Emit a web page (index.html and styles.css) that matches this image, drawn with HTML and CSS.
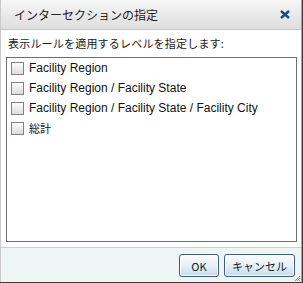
FILE: index.html
```html
<!DOCTYPE html>
<html lang="ja">
<head>
  <meta charset="UTF-8">
  <title>インターセクションの指定</title>
  <link rel="stylesheet" href="styles.css">
</head>
<body>
<div class="frame">
  <div class="dialog">
    <div class="titlebar">
      <span class="title">インターセクションの指定</span>
      <svg class="close" viewBox="0 0 10 9" width="10" height="9">
        <path d="M1 1 L9 8 M9 1 L1 8"></path>
      </svg>
    </div>

    <div class="content">
      <div class="hint">表示ルールを適用するレベルを指定します:</div>
      <div class="levels">
        <label class="level"><span class="check"></span>Facility Region</label>
        <label class="level"><span class="check"></span>Facility Region / Facility State</label>
        <label class="level"><span class="check"></span>Facility Region / Facility State / Facility City</label>
        <label class="level ja"><span class="check"></span>総計</label>
      </div>
    </div>

    <div class="footer">
      <button class="btn btn-ok">OK</button>
      <button class="btn btn-cancel">キャンセル</button>
      <svg class="grip" viewBox="0 0 7 7" width="7" height="7">
        <path d="M6 1 L1 6 M6 3 L3 6 M6 5 L5 6"></path>
      </svg>
    </div>
  </div>
</div>
</body>
</html>
```

FILE: styles.css
```css
html, body {
  margin: 0;
  padding: 0;
  background: #fff;
}

.frame {
  width: 303px;
  height: 283px;
  box-sizing: border-box;
  border-right: 1px solid #3c3c3c;
  border-bottom: 1px solid #3c3c3c;
}

.dialog {
  height: 100%;
  box-sizing: border-box;
  border-left: 1px solid #c9c9c9;
  border-right: 1px solid #a4a4a4;
  display: flex;
  flex-direction: column;
  font-family: "Liberation Sans", "Noto Sans CJK JP", sans-serif;
  color: #1a1a1a;
}

/* title */
.titlebar {
  height: 29px;
  flex: none;
  display: flex;
  align-items: center;
  justify-content: space-between;
  padding: 0 11px 0 13px;
  background: linear-gradient(#f6f6f6, #dedede);
  border-bottom: 1px solid #c6c6c6;
}

.title {
  font-family: "Noto Sans CJK JP", sans-serif;
  font-size: 12px;
  color: #222;
  line-height: 14px;
}

.close {
  display: block;
  margin-top: -1px;
}

.close path {
  stroke: #1d4c7c;
  stroke-width: 2.4;
  fill: none;
}

/* body */
.content {
  flex: 1;
  display: flex;
  flex-direction: column;
  padding: 6px 4px 5px 5px;
  background: #fff;
}

.hint {
  font-family: "Noto Sans CJK JP", sans-serif;
  font-size: 11px;
  line-height: 14px;
  padding-left: 2px;
  letter-spacing: .2px;
}

.levels {
  flex: 1;
  margin-top: 7px;
  border: 1px solid #6c6e78;
  display: flex;
  flex-direction: column;
}

.level {
  height: 20px;
  display: flex;
  align-items: center;
  padding-left: 4px;
  font-size: 12px;
  color: #111;
}

.level.ja {
  font-family: "Noto Sans CJK JP", sans-serif;
  font-size: 11px;
}

.check {
  width: 11px;
  height: 11px;
  margin-right: 5px;
  border: 1px solid #7f8287;
  background: linear-gradient(#fdfdfd, #dcdcdc);
  flex: none;
}

/* buttons */
.footer {
  position: relative;
  height: 35px;
  flex: none;
  display: flex;
  justify-content: flex-end;
  align-items: flex-start;
  gap: 5px;
  padding: 6px 6px 0 0;
  box-sizing: border-box;
  background: #edf6f5;
  border-top: 1px solid #c9d0cf;
}

.btn {
  height: 23px;
  padding: 0;
  border: 1px solid #3f5f7e;
  border-radius: 3px;
  background: linear-gradient(#fbfdfe, #e3eef6 55%, #c6dbea);
  box-shadow: inset 0 0 0 1px #fff;
  font-family: "Noto Sans CJK JP", sans-serif;
  font-size: 11px;
  color: #1a1a1a;
}

.btn-ok {
  width: 40px;
}

.btn-cancel {
  width: 71px;
}

.grip {
  position: absolute;
  right: 0;
  bottom: 0;
}

.grip path {
  stroke: #8a8f90;
  stroke-width: 1;
  fill: none;
}
```
